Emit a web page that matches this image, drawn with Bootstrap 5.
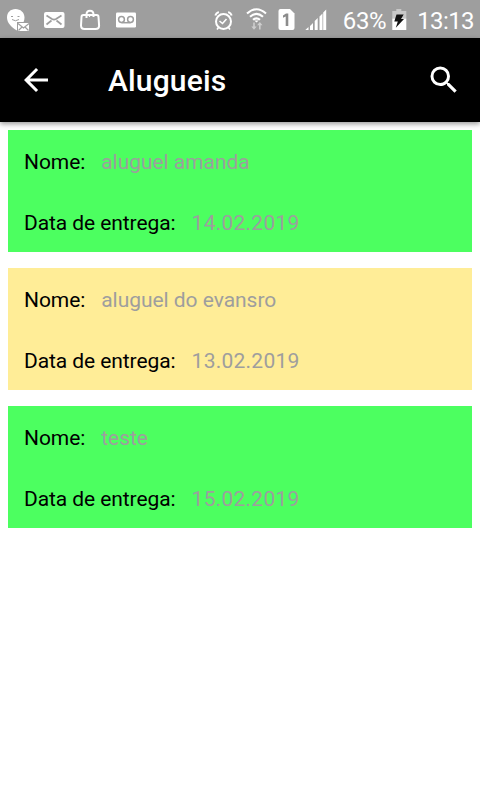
<!DOCTYPE html>
<html lang="pt-BR">
<head>
<meta charset="utf-8">
<meta name="viewport" content="width=device-width, initial-scale=1">
<title>Alugueis</title>
<link href="https://cdn.jsdelivr.net/npm/bootstrap@5.3.0/dist/css/bootstrap.min.css" rel="stylesheet">
<style>
body { font-family: Roboto, sans-serif; min-height: 800px; }
svg { display: block; flex: none; }
.status-bar { height: 38px; background: #9e9e9e; color: #fff; font-size: 24px; line-height: 38px; padding: 4px 6px 0 6px; letter-spacing: -.4px; }
.status-bar svg { margin-top: -2px; }
.status-left { gap: 13px; }
.clock { letter-spacing: -.6px; }
.app-bar { height: 84px; background: #000; box-shadow: 0 2px 5px rgba(0,0,0,.4); padding: 0 18px 0 18px; }
.app-title { font-size: 30px; font-weight: 500; line-height: 36px; margin: 2px 0 0 54px; letter-spacing: .15px; }
.rentals { padding: 8px; gap: 16px; }
.rental { font-size: 21px; line-height: 25px; padding: 0 16px; color: #000; }
.rental-row { height: 61px; padding-top: 3px; gap: 16px; }
.rental dt { letter-spacing: -.08px; }
.rental dd { color: #9e9e9e; letter-spacing: -.04px; }
.rental .return-date { letter-spacing: .25px; }
.on-time { background: #4cff60; }
.due { background: #ffed97; }
</style>
</head>
<body class="bg-white">
<header>
  <div class="status-bar d-flex align-items-center justify-content-between">
    <div class="status-left d-flex align-items-center">
      <svg width="24" height="24" viewBox="6 8 24 24">
        <path d="M15.500 9c5 0 9 3.500 9 8.500 0 1.500-.3 3-.9 4.500H17v8.500C11 27 7 22.500 7 17.500 7 12.500 10.500 9 15.500 9z" fill="#fff"/>
        <path d="M11 16.500h2M17.500 16.500h2M12 19.500q3.500 2.500 7 0" fill="none" stroke="#9e9e9e"/>
        <path d="M18 23h11v8H18z" fill="#fff"/>
        <path d="M18 23.500l5.500 4.500 5.500-4.500M18.500 30.500l3.500-3.500M28.500 30.500l-3.500-3.500" fill="none" stroke="#9e9e9e" stroke-width="1.200"/>
      </svg>
      <svg width="23" height="24" viewBox="43 8 23 24">
        <rect x="44" y="12" width="20.500" height="16" rx="2" fill="#fff"/>
        <path d="M46.500 15.500l5.500 3.500q2 1.200 4 0l5.500-3.500M46.500 24.500l5-4M61.500 24.500l-5-4" fill="none" stroke="#9e9e9e" stroke-width="1.700"/>
      </svg>
      <svg width="23" height="24" viewBox="79 8 23 24" fill="none" stroke="#fff">
        <path d="M83.500 15h13q2 0 2 2l.6 8.500q0 3.500-3.500 3.500H84.500q-3.500 0-3.500-3.500l.5-8.500q0-2 2-2z" stroke-width="2"/>
        <path d="M86.500 18v-3.500c0-5 7-5 7 0v2.500" stroke-width="2"/>
        <path d="M89.500 17v-3" stroke-width="1.200"/>
      </svg>
      <svg width="22" height="24" viewBox="115 8 22 24">
        <rect x="116" y="12.500" width="20" height="15" rx="1.200" fill="#fff"/>
        <g fill="none" stroke="#9e9e9e" stroke-width="1.500"><circle cx="121.500" cy="19.500" r="2.900"/><circle cx="130.500" cy="19.500" r="2.900"/><path d="M121.500 22.700h9"/></g>
      </svg>
    </div>
    <div class="d-flex align-items-center">
      <svg width="30" height="24" viewBox="213 8 30 24" fill="none" stroke="#fff">
        <circle cx="223.500" cy="21.500" r="7.500" stroke-width="2"/>
        <path d="M215.300 15.500q.7-2.500 3.500-3.500M228.200 12q2.800 1 3.500 3.500" stroke-width="2"/>
        <path d="M219.500 21l3 2.500 4-4.500M218.500 27.500l-1.500 2M228.500 27.500l1.500 2" stroke-width="1.600"/>
      </svg>
      <svg width="33" height="24" viewBox="243 8 33 24">
        <g fill="none" stroke="#fff" stroke-width="2.100"><path d="M247 13.500q9.500-8.500 19 0M250 16.800q6.500-5.800 13 0M253 19.800q3.500-3 7 0"/></g>
        <path d="M254.300 20.400h4.400l-2.200 2.100z" fill="#fff"/>
        <path d="M253.200 22.500v4h-1.900l2.700 3.300 2.700-3.300h-1.900v-4zM259 29.500v-4.200h-1.900l2.700-3.300 2.700 3.300h-1.900v4.200z" fill="#cecece"/>
      </svg>
      <svg width="28" height="24" viewBox="276 8 28 24">
        <path d="M280.500 9h9.500l4.500 4.500v14.500q0 2-2 2h-12q-2 0-2-2V11q0-2 2-2z" fill="#fff"/>
        <path d="M283 15.500l3-2h2.300V26h-2.600V16.500l-2.700 1.200z" fill="#8c8c8c"/>
      </svg>
      <svg width="39" height="24" viewBox="304 8 39 24" fill="#fff">
        <path d="M305.300 30l3.200-3v3zM310 26l3-3v7h-3zM314.700 21l3-3v12h-3zM319.500 16.500l3-3V30h-3zM323.200 12.500l3-3V30h-3z"/>
      </svg>
      <span>63%</span>
      <svg width="31" height="24" viewBox="386 8 31 24">
        <path d="M396.300 9h5v2h5v7.500h-14V11h4z" fill="#c9c9c9"/>
        <path d="M392.300 18.500h14V30h-14z" fill="#fff"/>
        <path d="M396.500 14.500h7.200l-2.700 4.500h3l-8.200 8.800 2-6.300h-3.500z" fill="#111"/>
      </svg>
      <span class="clock">13:13</span>
    </div>
  </div>
  <nav class="app-bar d-flex align-items-center text-white position-relative" aria-label="Alugueis">
    <svg width="36" height="36" viewBox="0 0 24 24" fill="#fff"><path d="M20 11H7.830l5.590-5.590L12 4l-8 8 8 8 1.410-1.410L7.830 13H20v-2z"/></svg>
    <h1 class="app-title">Alugueis</h1>
    <svg class="ms-auto" width="36" height="36" viewBox="0 0 24 24" fill="#fff"><path d="M15.500 14h-.79l-.28-.27A6.471 6.471 0 0 0 16 9.500 6.500 6.500 0 1 0 9.500 16c1.610 0 3.090-.59 4.230-1.570l.27.28v.79l5 4.990L20.490 19l-4.990-5zm-6 0C7.010 14 5 11.990 5 9.500S7.010 5 9.500 5 14 7.010 14 9.500 11.990 14 9.500 14z"/></svg>
  </nav>
</header>
<main class="rentals d-flex flex-column">
  <dl class="rental on-time mb-0">
    <div class="rental-row d-flex align-items-center"><dt class="fw-normal">Nome:</dt><dd class="mb-0">aluguel amanda</dd></div>
    <div class="rental-row d-flex align-items-center"><dt class="fw-normal">Data de entrega:</dt><dd class="return-date mb-0">14.02.2019</dd></div>
  </dl>
  <dl class="rental due mb-0">
    <div class="rental-row d-flex align-items-center"><dt class="fw-normal">Nome:</dt><dd class="mb-0">aluguel do evansro</dd></div>
    <div class="rental-row d-flex align-items-center"><dt class="fw-normal">Data de entrega:</dt><dd class="return-date mb-0">13.02.2019</dd></div>
  </dl>
  <dl class="rental on-time mb-0">
    <div class="rental-row d-flex align-items-center"><dt class="fw-normal">Nome:</dt><dd class="mb-0">teste</dd></div>
    <div class="rental-row d-flex align-items-center"><dt class="fw-normal">Data de entrega:</dt><dd class="return-date mb-0">15.02.2019</dd></div>
  </dl>
</main>
<script src="https://cdn.jsdelivr.net/npm/bootstrap@5.3.0/dist/js/bootstrap.bundle.min.js"></script>
</body>
</html>
